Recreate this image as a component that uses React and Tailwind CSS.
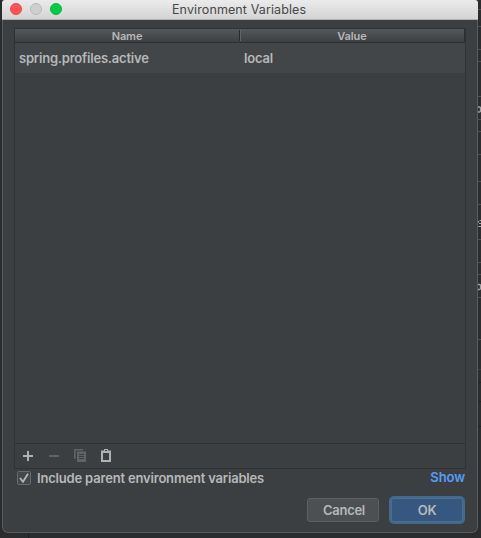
const lines = [
  [9, '#4c5052'], [26, '#4c5052'], [49, '#4c5052'], [61, '#4c5052'], [96, '#4c5052'],
  [119, '#4c5052'], [131, '#4c5052'], [154, '#4c5052'], [181, '#4c5052'], [204, '#4c5052'],
  [239, '#4c5052'], [262, '#4c5052'], [274, '#4c5052'], [297, '#4c5052'], [339, '#4c5052'],
  [369, '#3c3f41'], [382, '#1f2022'], [401, '#1f2022'], [426, '#1f2022'],
];

function WindowBehind() {
  return (
    <svg className="h-[538px] w-[3px] shrink-0" viewBox="0 0 3 538">
      <rect width="3" height="538" fill="#2b2d2f" />
      {lines.map(([y, c]) => (
        <rect key={y} x="0" y={y} width="3" height="1" fill={c} />
      ))}
      <path d="M0 107h1.500q1 0 1 1v3q0 1-1 1H0M0 284.500h1.500q1 0 1 1v3q0 1-1 1H0" fill="none" stroke="#a0a2a3" strokeWidth="1.300" />
      <path d="M3 220.500H1.500M.5 221v1.500M1 223.500H3M.3 226.500H3" fill="none" stroke="#a0a2a3" strokeWidth="1.100" />
    </svg>
  );
}

function Toolbar() {
  return (
    <div className="flex h-[25px] items-center border-t border-[#2f3133] pl-[7px]">
      <svg width="90" height="14" viewBox="0 0 90 14">
        <path d="M1 6h10v2H1zM5 2h2v10H5z" fill="#afb1b3" />
        <path d="M27 6h10v2H27z" fill="#606263" />
        <path d="M52 0h9v1.400h-7.300v8.600h-1.700z" fill="#606263" />
        <path d="M55 2.400h9v10.600h-9z" fill="#606263" />
        <path d="M57 5h5v1h-5zM57 7h5v1h-5zM57 9h5v1h-5z" fill="#3c3f41" />
        <path d="M79 1.400h3v-1.400h4v1.400h3v11.600h-10zM81 4v7h6v-7zM83 1v1h2v-1z" fill="#afb1b3" fillRule="evenodd" />
      </svg>
    </div>
  );
}

export default function App() {
  return (
    <div className="flex h-[538px] w-[481px] overflow-hidden bg-[#2b2c2e] font-['Inter',sans-serif] text-[13px] font-semibold tracking-[-0.2px] text-[#b7b8b9]">
      <div className="flex w-[2px] shrink-0 flex-col bg-[#2b2c2e]" />
      <div className="flex w-[476px] shrink-0 flex-col">
        <div className="flex h-[514px] grow flex-col overflow-hidden rounded-t-[3px] rounded-b-[6px] bg-[#3c3f41]">
          <div className="flex h-5 shrink-0 border-b border-[#b0b3b0] bg-linear-to-b from-[#ebebeb] to-[#d4d4d4]">
            <div className="flex w-[70px] gap-2 pt-[3px] pl-2">
              <div className="size-3 rounded-full border border-[#e9484a] bg-[#ff5257]" />
              <div className="size-3 rounded-full border border-[#b9b9b9] bg-[#cfcfcf]" />
              <div className="size-3 rounded-full border border-[#08b83c] bg-[#05cc47]" />
            </div>
            <div className="ml-[100px] text-[12.500px] leading-[19px] font-normal tracking-[0.11px] whitespace-nowrap text-[#474747]">Environment Variables</div>
          </div>
          <div className="flex grow flex-col rounded-b-[6px] border-x border-b border-[#595c5e] px-[11px] pt-2">
            <div className="flex h-[441px] w-[452px] shrink-0 flex-col border border-[#2f3133]">
              <div className="flex h-[14px] shrink-0 border-r border-b border-[#2d2f31] bg-linear-to-b from-[#55585a] to-[#3d3f42] text-[11px] leading-[14px] tracking-[-0.1px]">
                <div className="w-[224px] text-center">Name</div>
                <div className="my-px w-0.5 border-r border-l border-r-[#636668] border-l-[#282a2c]" />
                <div className="w-[222px] text-center">Value</div>
              </div>
              <div className="flex h-[30px] shrink-0 bg-[#424648] leading-[31px]">
                <div className="w-[225px] pl-1">spring.profiles.active</div>
                <div className="pl-1">local</div>
              </div>
              <div className="grow" />
              <Toolbar />
            </div>
            <div className="flex h-[20px] justify-between pr-px pl-[3px] leading-[20px]">
              <div className="flex">
                <svg className="mt-[2px] mr-1.5" width="14" height="14" viewBox="0 0 14 14">
                  <rect x=".5" y=".5" width="13" height="13" rx="1" fill="#43494a" stroke="#6b6b6b" />
                  <path d="M3 7l3 3.700L11 2.700" fill="none" stroke="#b5b7b8" strokeWidth="1.800" />
                </svg>
                <span className="-mt-px tracking-[-0.18px] whitespace-nowrap">Include parent environment variables</span>
              </div>
              <span className="-mt-[2px] tracking-[-0.1px] text-[#589df6]">Show</span>
            </div>
            <div className="mt-[7px] flex justify-end gap-2.5 pr-px">
              <button className="mt-[2px] h-6 w-[72px] rounded-[3px] border border-[#5e6060] bg-[#4c5052] pl-0.5 leading-[22px] tracking-[-0.3px]">Cancel</button>
              <button className="h-7 w-[76px] rounded-[5px] border-2 border-[#43698e] bg-[#365880] p-0 leading-[24px] ring-1 ring-[#4c708c] ring-inset">OK</button>
            </div>
          </div>
        </div>
        <div className="h-[5px] shrink-0 pl-[26px]">
          <div className="h-full w-px bg-[#1f2022]" />
        </div>
      </div>
      <WindowBehind />
    </div>
  );
}
